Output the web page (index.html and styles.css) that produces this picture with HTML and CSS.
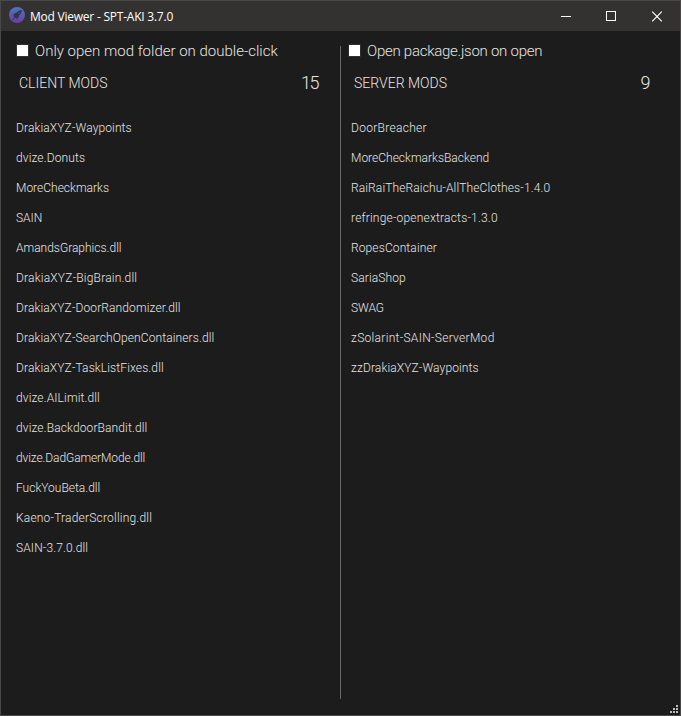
FILE: index.html
```html
<!DOCTYPE html>
<html lang="en">
<head>
<meta charset="utf-8">
<title>Mod Viewer - SPT-AKI 3.7.0</title>
<link rel="stylesheet" href="styles.css">
</head>
<body>
<div class="window">
  <header class="titlebar">
    <svg class="logo" width="16" height="16" viewBox="0 0 16 16">
      <defs><linearGradient id="g" x1="0" y1="0" x2="0" y2="1"><stop offset="0" stop-color="#4a78bd"/><stop offset="1" stop-color="#6c3da0"/></linearGradient></defs>
      <circle cx="8" cy="8" r="8" fill="url(#g)"/>
      <path d="M12.9 3C10.5 3.2 8.8 4.2 7.4 5.8L5.4 6.4 3.6 8.4l1.8.2-.8 1.7 1 1 1.7-.7.1 1.900 2-1.700.5-2.100C11.600 7.200 12.700 5.400 12.900 3zM4.300 11l-1.300 2.200 2.200-1.200z" fill="#30334f"/>
      <circle cx="10" cy="6" r=".8" fill="#56619f"/>
    </svg>
    <h1 class="title">Mod Viewer - SPT-AKI 3.7.0</h1>
    <div class="controls">
      <svg width="45" height="29" viewBox="0 0 45 29" shape-rendering="crispEdges"><path d="M17 14h10v1H17z" fill="#fff"/></svg>
      <svg width="45" height="29" viewBox="0 0 45 29" shape-rendering="crispEdges"><path d="M17.5 9.5h9v9h-9z" fill="none" stroke="#fff"/></svg>
      <svg width="45" height="29" viewBox="0 0 45 29"><path d="M18.2 9.700l9.600 9.600m0-9.600l-9.600 9.600" fill="none" stroke="#fff" stroke-width="1.15"/></svg>
    </div>
  </header>
  <main class="content">
    <section class="pane client">
      <label class="option"><span class="box"></span><span>Only open mod folder on double-click</span></label>
      <div class="heading"><h2>CLIENT MODS</h2><span class="count">15</span></div>
      <ul class="mods">
        <li>DrakiaXYZ-Waypoints</li>
        <li>dvize.Donuts</li>
        <li class="even">MoreCheckmarks</li>
        <li class="even">SAIN</li>
        <li class="even">AmandsGraphics.dll</li>
        <li class="loose">DrakiaXYZ-BigBrain.dll</li>
        <li>DrakiaXYZ-DoorRandomizer.dll</li>
        <li>DrakiaXYZ-SearchOpenContainers.dll</li>
        <li>DrakiaXYZ-TaskListFixes.dll</li>
        <li>dvize.AILimit.dll</li>
        <li>dvize.BackdoorBandit.dll</li>
        <li class="tight">dvize.DadGamerMode.dll</li>
        <li class="even">FuckYouBeta.dll</li>
        <li class="loose">Kaeno-TraderScrolling.dll</li>
        <li>SAIN-3.7.0.dll</li>
      </ul>
    </section>
    <div class="divider"></div>
    <section class="pane server">
      <label class="option"><span class="box"></span><span>Open package.json on open</span></label>
      <div class="heading"><h2>SERVER MODS</h2><span class="count">9</span></div>
      <ul class="mods">
        <li class="looser">DoorBreacher</li>
        <li class="even">MoreCheckmarksBackend</li>
        <li>RaiRaiTheRaichu-AllTheClothes-1.4.0</li>
        <li class="loose">refringe-openextracts-1.3.0</li>
        <li>RopesContainer</li>
        <li>SariaShop</li>
        <li class="tight">SWAG</li>
        <li class="looser">zSolarint-SAIN-ServerMod</li>
        <li>zzDrakiaXYZ-Waypoints</li>
      </ul>
    </section>
  </main>
  <svg class="grip" width="8" height="8" viewBox="0 0 8 8" shape-rendering="crispEdges"><path d="M6 0h2v2H6zM3 3h2v2H3zM6 3h2v2H6zM0 6h2v2H0zM3 6h2v2H3zM6 6h2v2H6z" fill="#bfbfbf"/></svg>
</div>
</body>
</html>
```
FILE: styles.css
```css
* { box-sizing: border-box; }
body { margin: 0; background: #1c1c1c; }
.window {
  position: relative;
  display: flex;
  flex-direction: column;
  width: 681px;
  height: 716px;
  border: 1px solid #484848;
  background: #1c1c1c;
  color: #e6e6e3;
  font-family: Roboto, "Liberation Sans", sans-serif;
  font-weight: 300;
}
.titlebar {
  display: flex;
  align-items: center;
  height: 30px;
  padding: 0 1px 0 8px;
  background: #333230;
}
.logo { margin-top: -2px; }
.title {
  margin: 0 0 0 5px;
  color: #fff;
  font: 400 12px/29px "Open Sans", "Noto Sans", sans-serif;
  letter-spacing: -0.23px;
  white-space: nowrap;
}
.controls { display: flex; height: 29px; margin-left: auto; }
.content { display: flex; flex: 1; min-height: 0; }
.pane { padding-top: 10px; }
.client { width: 339px; padding-left: 15px; }
.server { width: 339px; padding-left: 7px; }
.divider { width: 1px; margin: 15px 0 16px; background: #696969; }
.option { display: flex; align-items: center; height: 20px; font-size: 15px; letter-spacing: 0; white-space: nowrap; }
.server .option { letter-spacing: -0.26px; }
.box { width: 13px; height: 13px; margin: -1px 6px 0 0; border: 1px solid #303030; background: #fff; }
.heading { display: flex; align-items: center; justify-content: space-between; height: 44px; padding-left: 3px; }
.client .heading { padding-right: 22px; }
.server .heading { padding: 0 31px 0 6px; }
.heading h2 { margin: 0; font-size: 14px; font-weight: 300; }
.count { margin-top: -2px; font-size: 18px; letter-spacing: -1.5px; }
.mods { margin: 8px 0 0; padding: 0; list-style: none; }
.server .mods { padding-left: 3px; }
.mods li { height: 30px; font-size: 12px; line-height: 30px; letter-spacing: 0.12px; white-space: nowrap; }
.mods .tight { letter-spacing: -0.1px; }
.mods .even { letter-spacing: 0; }
.mods .loose { letter-spacing: 0.2px; }
.mods .looser { letter-spacing: 0.3px; }
.grip { position: absolute; right: 2px; bottom: 2px; }
```
